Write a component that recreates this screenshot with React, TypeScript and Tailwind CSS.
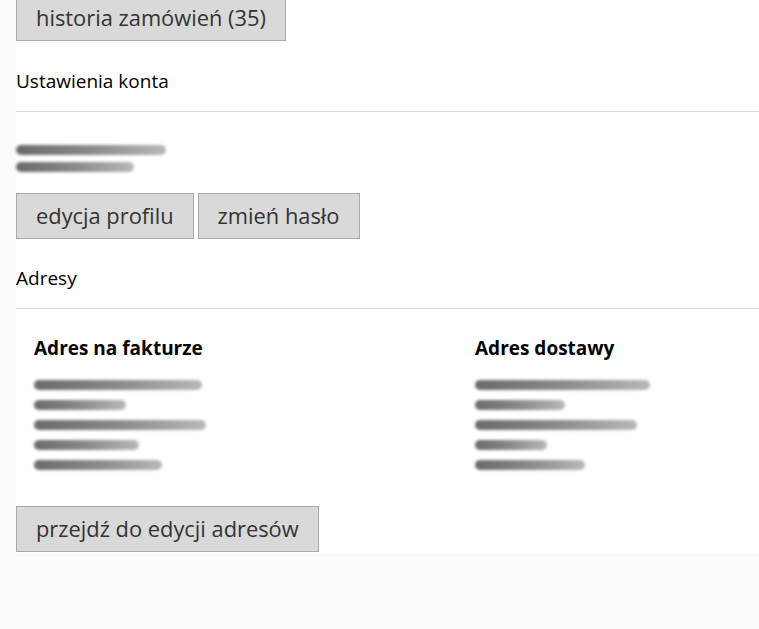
import React from "react";

const btn =
  "inline-block h-[46px] px-[19px] bg-[#d9d9d9] border border-[#aaaaaa] text-[#333333] text-[21.85px] leading-[44px] align-top whitespace-nowrap";

function Smudge({ widths, gap = "gap-[7px]" }: { widths: number[]; gap?: string }) {
  return (
    <div className={`flex flex-col ${gap}`}>
      {widths.map((w, i) => (
        <div
          key={i}
          className="h-[10px] rounded-full bg-gradient-to-r from-[#6a6a6a] via-[#8a8a8a] to-[#b8b8b8] blur-[1.5px]"
          style={{ width: w }}
        />
      ))}
    </div>
  );
}

export default function App() {
  return (
    <div className="min-h-[629px] w-[759px] bg-[#fcfbf9] overflow-hidden" style={{ fontFamily: '"Open Sans", sans-serif' }}>
      <div className="ml-[16px] bg-white pb-px">
        <div className="-mt-[5px]">
          <button className={btn}>historia zamówień (35)</button>
        </div>

        <div className="mt-[27px] pb-[17px] border-b border-[#dddddd] text-[19px] leading-[26px] text-black">
          Ustawienia konta
        </div>

        <div className="mt-[33px]">
          <Smudge widths={[150, 118]} />
        </div>

        <div className="mt-[21px] flex gap-[4px]">
          <button className={btn}>edycja profilu</button>
          <button className={btn}>zmień hasło</button>
        </div>

        <div className="mt-[26px] pb-[17px] border-b border-[#dddddd] text-[19px] leading-[26px] text-black">
          Adresy
        </div>

        <div className="mt-[26px] pl-[18px] grid grid-cols-[441px_1fr]">
          <div>
            <div className="text-[19px] leading-[26px] font-bold text-black">Adres na fakturze</div>
            <div className="mt-[19px]">
              <Smudge widths={[168, 92, 172, 105, 128]} gap="gap-[10px]" />
            </div>
          </div>
          <div>
            <div className="text-[19px] leading-[26px] font-bold text-black">Adres dostawy</div>
            <div className="mt-[19px]">
              <Smudge widths={[175, 90, 162, 72, 110]} gap="gap-[10px]" />
            </div>
          </div>
        </div>

        <div className="mt-[36px]">
          <button className={btn}>przejdź do edycji adresów</button>
        </div>
      </div>
    </div>
  );
}
